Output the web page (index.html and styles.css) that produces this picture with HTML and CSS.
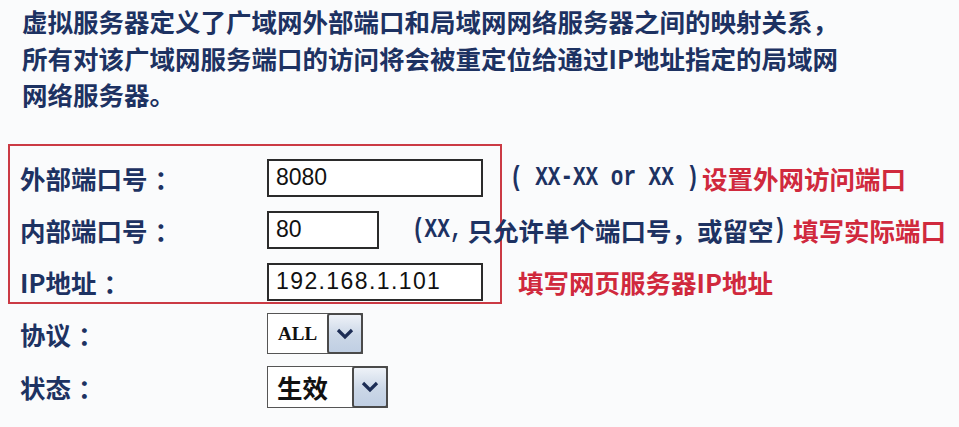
FILE: index.html
```html
<!DOCTYPE html>
<html lang="zh-CN">
<head>
<meta charset="utf-8">
<title>虚拟服务器</title>
<link rel="stylesheet" href="styles.css">
</head>
<body>
<p class="intro">虚拟服务器定义了广域网外部端口和局域网网络服务器之间的映射关系，<br>所有对该广域网服务端口的访问将会被重定位给通过IP地址指定的局域网<br>网络服务器。</p>

<div class="mapbox">
  <div class="row">
    <span class="label">外部端口号<span class="colon">：</span></span>
    <span class="field wide">8080</span>
    <span class="hint hint1"><span class="mono">( XX-XX or XX )</span><span class="red note1">设置外网访问端口</span></span>
  </div>
  <div class="row">
    <span class="label">内部端口号<span class="colon">：</span></span>
    <span class="field narrow">80</span>
    <span class="hint hint2"><span class="mono">(XX,</span><span class="cjk">只允许单个端口号，或留空</span><span class="mono">)</span><span class="red note2">填写实际端口</span></span>
  </div>
  <div class="row">
    <span class="label">IP地址<span class="colon">：</span></span>
    <span class="field wide ip">192.168.1.101</span>
    <span class="hint hint3"><span class="red">填写网页服务器IP地址</span></span>
  </div>
</div>

<div class="extra">
  <div class="row srow">
    <span class="label">协议<span class="colon">：</span></span>
    <span class="select sel-all"><span class="sel-text latin">ALL</span><span class="sel-btn"><svg width="18" height="12" viewBox="0 0 18 12"><polyline points="2,2 9,9 16,2" fill="none" stroke="#1c2d55" stroke-width="3.2"/></svg></span></span>
  </div>
  <div class="row srow">
    <span class="label">状态<span class="colon">：</span></span>
    <span class="select sel-state"><span class="sel-text">生效</span><span class="sel-btn"><svg width="18" height="12" viewBox="0 0 18 12"><polyline points="2,2 9,9 16,2" fill="none" stroke="#1c2d55" stroke-width="3.2"/></svg></span></span>
  </div>
</div>
</body>
</html>
```

FILE: styles.css
```css
html, body {
  margin: 0;
  padding: 0;
}
body {
  width: 959px;
  height: 427px;
  overflow: hidden;
  background: #fafbfc;
  color: #1d3262;
  font-family: "Noto Sans CJK SC", "Noto Sans", sans-serif;
  font-weight: 700;
}
.intro {
  margin: 0;
  padding: 3px 0 0 22px;
  font-size: 25.5px;
  line-height: 36.5px;
  white-space: nowrap;
}
.mapbox {
  margin: 31px 0 0 8px;
  width: 494px;
  height: 160px;
  box-sizing: border-box;
  border: 2px solid #cb3a44;
  padding: 13px 0 0 10px;
  display: grid;
  grid-auto-rows: 38px;
  row-gap: 14px;
  align-content: start;
}
.row {
  display: flex;
  align-items: center;
  white-space: nowrap;
}
.label {
  width: 247px;
  flex: none;
  font-size: 25.5px;
}
.colon {
  margin-left: 7px;
}
.field {
  flex: none;
  height: 38px;
  box-sizing: border-box;
  border: 2px solid #2b2b2b;
  background: #fff;
  color: #111;
  font-family: "Liberation Sans", Arial, sans-serif;
  font-weight: 400;
  font-size: 23px;
  padding-left: 7px;
  display: flex;
  align-items: center;
}
.wide { width: 216px; }
.narrow { width: 112px; }
.ip { letter-spacing: 1.4px; }
.hint {
  font-size: 25.5px;
  display: flex;
  align-items: center;
}
.mono {
  display: inline-block;
  font-family: "Liberation Mono", "Courier New", monospace;
  font-size: 21px;
  font-weight: 700;
  white-space: pre;
  transform: scaleY(1.28);
}
.cjk { margin-left: 5px; }
.hint1 { margin-left: 27px; }
.hint2 { margin-left: 33px; }
.hint3 { margin-left: 35px; }
.red { color: #d0293d; }
.note1 { margin-left: 3px; }
.note2 { margin-left: 7px; }

.extra {
  padding: 9px 0 0 20px;
  display: grid;
  row-gap: 11px;
}
.srow { height: 42px; }
.select {
  flex: none;
  display: flex;
  align-items: stretch;
  height: 41px;
  box-sizing: border-box;
  border: 1.5px solid #555;
  background: #fff;
  color: #111;
}
.sel-all { width: 96px; }
.sel-state { width: 121px; height: 42px; }
.sel-text {
  flex: 1;
  display: flex;
  align-items: center;
  padding-left: 9px;
  font-size: 25.5px;
  font-weight: 700;
}
.latin {
  font-family: "Liberation Serif", serif;
  font-weight: 700;
  font-size: 19px;
  padding-left: 10px;
}
.sel-btn {
  flex: none;
  width: 36px;
  box-sizing: border-box;
  border: 2px solid #4a4a4a;
  border-radius: 3px;
  margin: -1px -1px -1px 0;
  background: linear-gradient(#eef2f8 0%, #cbd7e7 55%, #c0cfe3 100%);
  display: flex;
  justify-content: center;
  padding-top: 13px;
}
```
